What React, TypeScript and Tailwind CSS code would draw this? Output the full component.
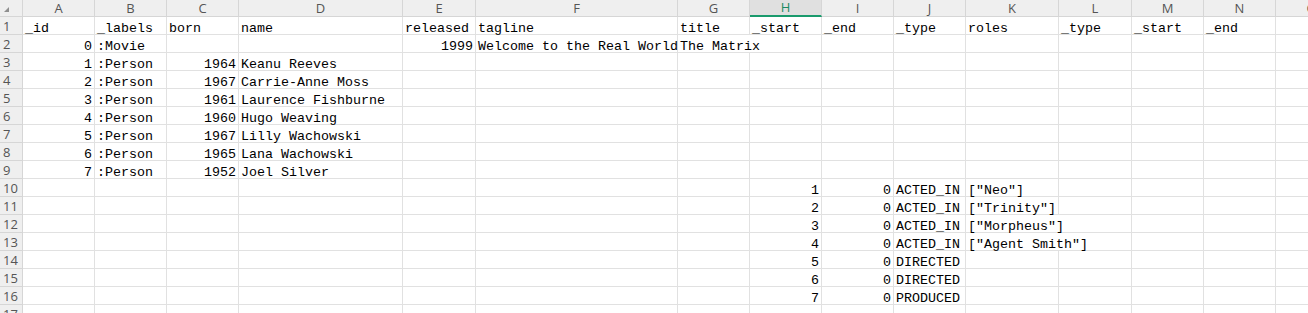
import React from "react";

type Cell = { t: string; r?: boolean; span?: number };

const cols = ["A", "B", "C", "D", "E", "F", "G", "H", "I", "J", "K", "L", "M", "N", "O"];

const rows: (Cell | null)[][] = [
  [
    { t: "_id" }, { t: "_labels" }, { t: "born" }, { t: "name" }, { t: "released" }, { t: "tagline" },
    { t: "title" }, { t: "_start" }, { t: "_end" }, { t: "_type" }, { t: "roles" }, { t: "_type" },
    { t: "_start" }, { t: "_end" }, null,
  ],
  [
    { t: "0", r: true }, { t: ":Movie" }, null, null, { t: "1999", r: true },
    { t: "Welcome to the Real World" }, { t: "The Matrix", span: 2 }, null, null, null, null, null, null,
  ],
];

const people: [string, string, string][] = [
  ["1", "1964", "Keanu Reeves"],
  ["2", "1967", "Carrie-Anne Moss"],
  ["3", "1961", "Laurence Fishburne"],
  ["4", "1960", "Hugo Weaving"],
  ["5", "1967", "Lilly Wachowski"],
  ["6", "1965", "Lana Wachowski"],
  ["7", "1952", "Joel Silver"],
];
people.forEach(([id, born, name]) => {
  rows.push([
    { t: id, r: true }, { t: ":Person" }, { t: born, r: true }, { t: name },
    null, null, null, null, null, null, null, null, null, null, null,
  ]);
});

const rels: [string, string, string | null][] = [
  ["1", "ACTED_IN", '["Neo"]'],
  ["2", "ACTED_IN", '["Trinity"]'],
  ["3", "ACTED_IN", '["Morpheus"]'],
  ["4", "ACTED_IN", '["Agent Smith"]'],
  ["5", "DIRECTED", null],
  ["6", "DIRECTED", null],
  ["7", "PRODUCED", null],
];
rels.forEach(([s, type, roles]) => {
  const r: (Cell | null)[] = [
    null, null, null, null, null, null, null,
    { t: s, r: true }, { t: "0", r: true }, { t: type },
  ];
  if (roles && roles.length > 11) {
    r.push({ t: roles, span: 2 }, null, null, null);
  } else {
    r.push(roles ? { t: roles } : null, null, null, null, null);
  }
  rows.push(r);
});
rows.push(Array(15).fill(null));

function normalizeRow(row: (Cell | null)[]): (Cell | null)[] {
  const out: (Cell | null)[] = [];
  let used = 0;
  for (const c of row) {
    if (used >= 15) break;
    out.push(c);
    used += c?.span ?? 1;
  }
  while (used < 15) {
    out.push(null);
    used++;
  }
  return out;
}

export default function App() {
  return (
    <div className="w-[1308px] h-[313px] overflow-hidden bg-white">
      <div className="grid w-[1348px] grid-cols-[23px_72px_72px_72px_164px_73px_202px_72px_72px_72px_72px_93px_73px_72px_72px_72px]">
        {/* header row */}
        <div className="relative h-[17px] bg-[#efefef] border-r border-b border-[#d6d6d6]">
          <svg className="absolute left-[4px] top-[7px]" width="5" height="5" viewBox="0 0 5 5">
            <polygon points="5,0 5,5 0,5" fill="#8f8f8f" />
          </svg>
        </div>
        {cols.map((c) =>
          c === "H" ? (
            <div
              key={c}
              className="h-[17px] bg-[#e0e0e0] border-r border-[#d6d6d6] border-b-2 border-b-[#1a9a6c] flex items-center justify-center text-[13px] leading-[15px] text-[#1a8a62] font-['Open_Sans',sans-serif]"
            >
              {c}
            </div>
          ) : (
            <div
              key={c}
              className="h-[17px] bg-[#efefef] border-r border-b border-[#d6d6d6] flex items-center justify-center text-[13px] leading-[16px] text-[#555555] font-['Open_Sans',sans-serif]"
            >
              {c}
            </div>
          )
        )}
        {rows.map((row, ri) => (
          <React.Fragment key={ri}>
            <div className="h-[18px] bg-[#efefef] border-r border-b border-[#d6d6d6] flex items-end pl-[3px] text-[13px] leading-[15px] text-[#555555] font-['Open_Sans',sans-serif]">
              {ri + 1}
            </div>
            {normalizeRow(row).map((c, ci) => (
              <div
                key={ci}
                className={
                  "h-[18px] border-r border-b border-[#e1e1e1] flex items-end whitespace-nowrap overflow-visible text-[13.33px] leading-[11px] text-black font-['Liberation_Mono',monospace] " +
                  (c?.span === 2 ? "col-span-2 " : "") +
                  (c?.r ? "justify-end pr-[2px]" : "pl-[2px]")
                }
              >
                {c ? c.t : ""}
              </div>
            ))}
          </React.Fragment>
        ))}
      </div>
    </div>
  );
}
